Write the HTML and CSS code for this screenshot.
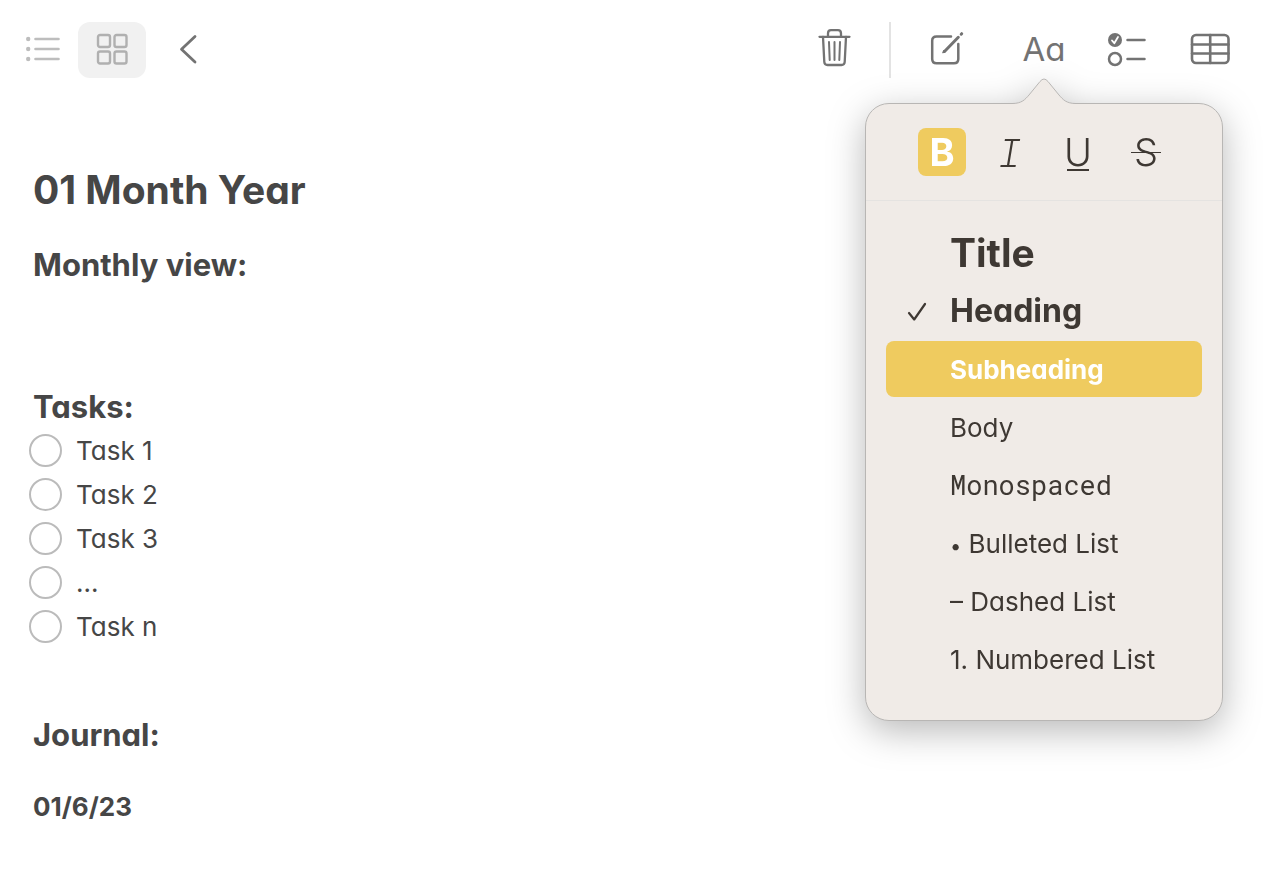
FILE: index.html
```html
<!DOCTYPE html>
<html lang="en">
<head>
<meta charset="utf-8">
<title>Notes</title>
<link rel="stylesheet" href="styles.css">
</head>
<body>
<header class="toolbar">
  <div class="views">
    <button class="view" type="button" aria-label="List view">
      <svg class="icon muted" width="36" height="36" viewBox="0 0 36 36">
        <g fill="currentColor" stroke="none"><circle cx="2.2" cy="8" r="2.2"/><circle cx="2.2" cy="18" r="2.2"/><circle cx="2.2" cy="28" r="2.2"/></g>
        <path d="M9.5 8H32.500M9.5 18H32.500M9.5 28H32.500" stroke-width="2.6"/>
      </svg>
    </button>
    <button class="view selected" type="button" aria-label="Gallery view">
      <svg class="icon grid" width="32" height="32" viewBox="0 0 32 32" stroke-width="2.4">
        <rect x="2" y="2" width="12" height="12" rx="2"/><rect x="18.500" y="2" width="12" height="12" rx="2"/>
        <rect x="2" y="18.500" width="12" height="12" rx="2"/><rect x="18.500" y="18.500" width="12" height="12" rx="2"/>
      </svg>
    </button>
    <button class="view back" type="button" aria-label="Back">
      <svg class="icon" width="20" height="32" viewBox="0 0 20 32" stroke-width="2.8"><path d="M17 3.500 3.500 16.200 17 29"/></svg>
    </button>
  </div>
  <div class="tools">
    <button class="tool" type="button" aria-label="Delete">
      <svg class="icon" width="36" height="40" viewBox="0 2 36 40" stroke-width="2.300">
        <path d="M3.500 9.800H33.500M12 9.500V6.500Q12 3.200 15 3.200H22Q25 3.200 25 6.500V9.500" />
        <path d="M7 10 8.300 35Q8.500 38 11.500 38H25.500Q28.500 38 28.700 35L30 10"/>
        <path d="M13 15 13.700 33M18.500 15V33M24 15 23.300 33" stroke-width="2"/>
      </svg>
    </button>
    <span class="separator"></span>
    <button class="tool compose" type="button" aria-label="New note">
      <svg class="icon" width="36" height="36" viewBox="0 0 36 36" stroke-width="2.5">
        <path d="M22 5.500H7.500Q3.200 5.500 3.200 9.800V28Q3.200 32.300 7.500 32.300H25Q29.300 32.300 29.300 28V13"/>
        <path d="M15.500 20.500 29.300 6.300" stroke-width="3"/><path d="m14 21.800 2.200-.8-1.300-1.400Z" fill="currentColor" stroke-width="1"/>
        <path d="m32.200 3.200.5-.5" stroke-width="3"/>
      </svg>
    </button>
    <div class="format">
      <button class="tool letters" type="button" aria-expanded="true">Aa</button>
      <section class="popover" aria-label="Text format">
        <svg class="arrow" width="64" height="27" viewBox="0 0 64 27">
          <path class="arrow-fill" d="M0 27V25.500C10 25.500 13 21.500 17 17L28 3.500Q32 -1.500 36 3.500L47 17C51 21.500 54 25.500 64 25.500V27Z"/>
          <path class="arrow-line" d="M0 25.500C10 25.500 13 21.500 17 17L28 3.500Q32 -1.500 36 3.500L47 17C51 21.500 54 25.500 64 25.500"/>
        </svg>
        <div class="styles">
          <button class="style bold" type="button" aria-pressed="true" aria-label="Bold">B</button>
          <button class="style italic" type="button" aria-label="Italic">I</button>
          <button class="style underline" type="button" aria-label="Underline"><span>U</span></button>
          <button class="style strike" type="button" aria-label="Strikethrough"><span>S</span></button>
        </div>
        <div class="menu">
          <button class="option title" type="button">Title</button>
          <button class="option heading" type="button">
            <svg class="icon check" width="20" height="20" viewBox="0 0 20 20" stroke-width="2.2"><path d="M2 11 7.200 17.500 18 2"/></svg>
            Heading
          </button>
          <button class="option subheading" type="button">Subheading</button>
          <button class="option" type="button">Body</button>
          <button class="option mono" type="button">Monospaced</button>
          <button class="option" type="button"><span class="bullet">•</span> Bulleted List</button>
          <button class="option" type="button">– Dashed List</button>
          <button class="option" type="button">1. Numbered List</button>
        </div>
      </section>
    </div>
    <button class="tool" type="button" aria-label="Checklist">
      <svg class="icon" width="40" height="36" viewBox="0 0 40 36" stroke-width="2.5">
        <circle cx="8" cy="9" r="7" fill="currentColor" stroke="none"/><path d="m5 9.500 2.300 2.700L11 6" stroke="#fff" stroke-width="1.800"/>
        <circle cx="8" cy="28" r="6"/><path d="M20.500 9H37.500M20.500 28H37.500"/>
      </svg>
    </button>
    <button class="tool" type="button" aria-label="Table">
      <svg class="icon" width="40" height="32" viewBox="0 0 40 32" stroke-width="2.6">
        <rect x="2" y="2" width="36.500" height="28" rx="4"/><path d="M20.200 2V30M2 11.500H38.500M2 20.500H38.500"/>
      </svg>
    </button>
  </div>
</header>
<main class="note">
  <h1>01 Month Year</h1>
  <h2>Monthly view:</h2>
  <h2 class="section">Tasks:</h2>
  <ul class="tasks">
    <li><label><input type="checkbox"><span>Task 1</span></label></li>
    <li><label><input type="checkbox"><span>Task 2</span></label></li>
    <li><label><input type="checkbox"><span>Task 3</span></label></li>
    <li><label><input type="checkbox"><span>...</span></label></li>
    <li><label><input type="checkbox"><span>Task n</span></label></li>
  </ul>
  <h2 class="journal">Journal:</h2>
  <h3>01/6/23</h3>
</main>
</body>
</html>
```
FILE: styles.css
```css
* { box-sizing: border-box; }

body {
  margin: 0;
  background: #fff;
  color: #464646;
  font: 26px/32px Inter, "Liberation Sans", sans-serif;
  font-feature-settings: "cv11";
}

button {
  margin: 0;
  padding: 0;
  border: 0;
  background: none;
  color: inherit;
  font: inherit;
  font-feature-settings: inherit;
}

.icon {
  display: block;
  fill: none;
  stroke: currentColor;
  stroke-linecap: round;
  stroke-linejoin: round;
}

.toolbar {
  display: flex;
  justify-content: space-between;
  padding: 22px 50px 0 10px;
  color: #737373;
}

.views, .tools { display: flex; }

.view {
  display: grid;
  place-items: center;
  width: 68px;
  height: 56px;
  padding-bottom: 2px;
  border-radius: 12px;
}

.muted { color: #bdbdbd; }
.grid { color: #b0b0b0; }
.selected { background: #f1f1f1; }
.back { margin-left: 8px; }

.tools { gap: 27px; }

.tool {
  display: grid;
  place-items: center;
  width: 56px;
  height: 56px;
  padding-bottom: 2px;
}

.compose { width: 58px; margin-right: 13px; }
.letters { font-size: 33px; }

.separator { width: 2px; background: #e3e3e3; }

.format { position: relative; }

.popover {
  position: absolute;
  top: 81px;
  left: 50%;
  z-index: 1;
  width: 358px;
  margin-left: -179px;
  border: 1px solid #b8b6b4;
  border-radius: 24px;
  background: #f0ebe7;
  color: #3e3833;
  filter: drop-shadow(0 10px 18px rgba(0, 0, 0, .28));
}

.arrow {
  position: absolute;
  left: 50%;
  bottom: 100%;
  margin: 0 0 -1px -32px;
}

.arrow-fill { fill: #f0ebe7; }
.arrow-line { fill: none; stroke: #b8b6b4; }

.styles {
  display: flex;
  justify-content: center;
  gap: 20px;
  padding: 24px 0;
  border-bottom: 1px solid #e5e3e1;
}

.style {
  display: grid;
  place-items: center;
  width: 48px;
  height: 48px;
  border-radius: 8px;
  font-size: 38px;
  font-weight: 300;
  line-height: 48px;
}

.bold { background: #efcb5f; color: #fff; font-weight: 700; }
.italic { font-family: "Roboto Mono", "DejaVu Sans Mono", monospace; font-style: italic; }
.underline span {
  background: linear-gradient(currentColor, currentColor) 50% 41px / 22px 2px no-repeat;
}
.strike span {
  padding: 0 3px;
  background: linear-gradient(currentColor, currentColor) center / 100% 1px no-repeat;
}

.menu {
  display: flex;
  flex-direction: column;
  gap: 2px;
  padding: 24px 20px 33px;
}

.option {
  position: relative;
  height: 56px;
  padding: 2px 0 0 64px;
  border-radius: 8px;
  text-align: left;
}

.title, .heading { padding-top: 0; font-weight: 700; }
.title { font-size: 39px; line-height: 48px; }
.heading { font-size: 32px; }
.subheading { background: #efcb5f; color: #fff; font-weight: 700; }
.mono { padding-top: 0; font-family: "Roboto Mono", "DejaVu Sans Mono", monospace; font-size: 27px; }
.bullet { font-size: 20px; line-height: 20px; }
.check { position: absolute; left: 21px; top: 19px; }

.note { padding: 88px 33px 56px; }

h1, h2, h3 { margin: 0; font-weight: 700; }
h1 { font-size: 39px; line-height: 48px; }
h2 { margin-top: 31px; font-size: 31px; line-height: 40px; }
h3 { margin-top: 36px; font-size: 26px; line-height: 32px; }
.section { margin-top: 102px; }
.journal { margin-top: 67px; }

.tasks {
  margin: 1px 0 0;
  padding: 0;
  list-style: none;
}

.tasks label {
  display: flex;
  align-items: center;
  gap: 14px;
  height: 44px;
  margin-left: -4px;
}

.tasks span { padding-top: 2px; }

.tasks input {
  appearance: none;
  width: 33px;
  height: 33px;
  margin: 0;
  border: 2px solid #bbb;
  border-radius: 50%;
}
```
